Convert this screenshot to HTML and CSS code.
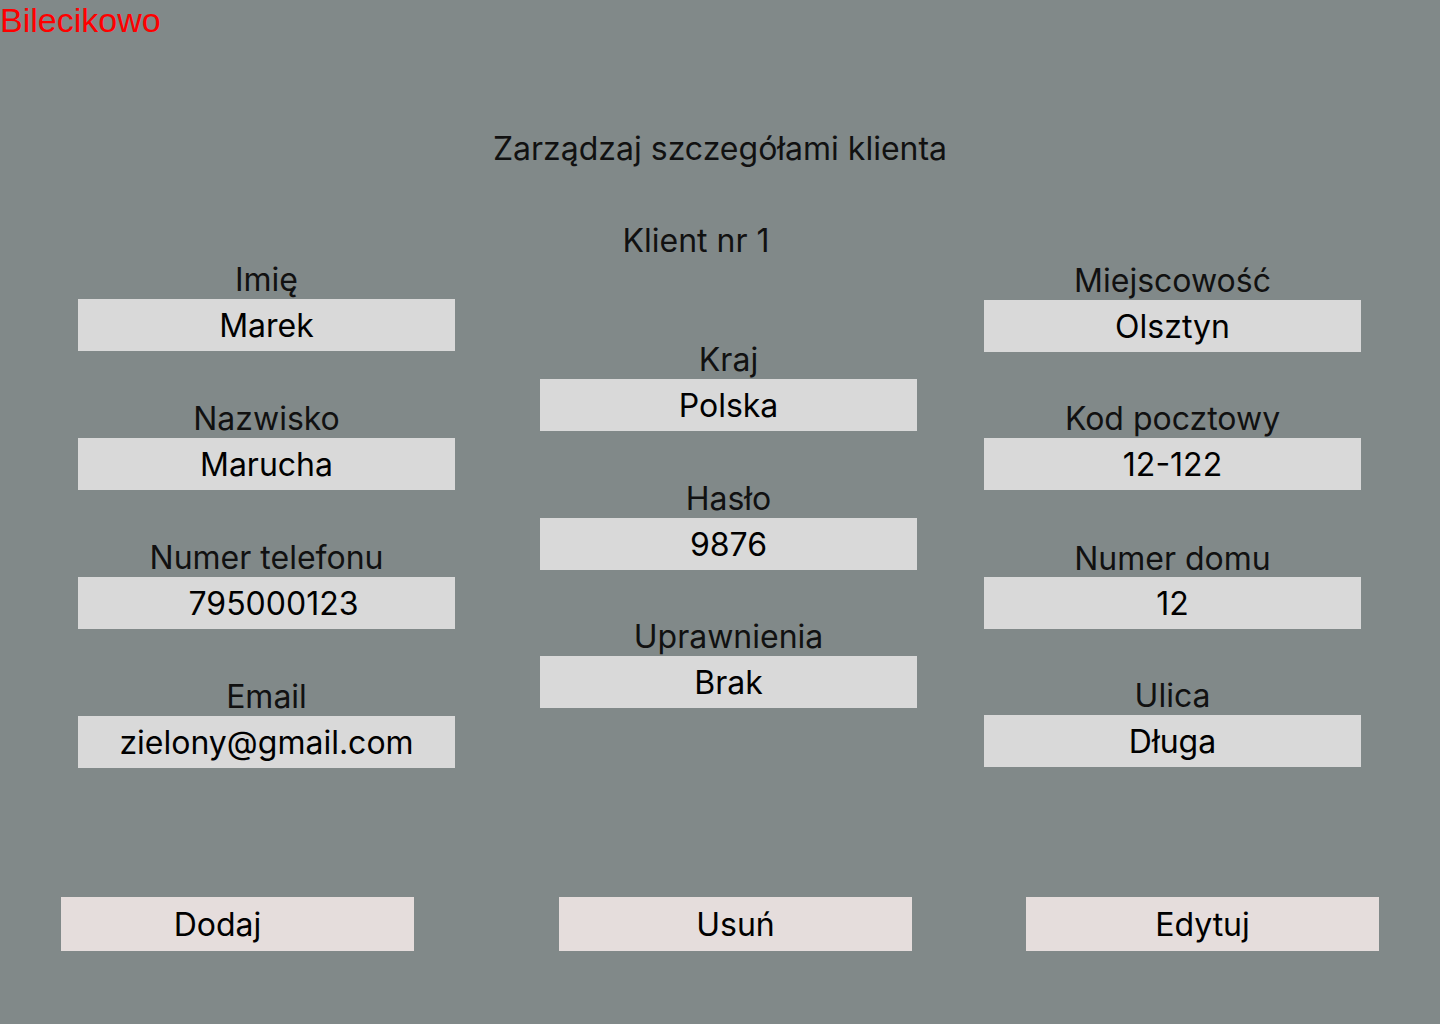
FILE: index.html
```html
<!DOCTYPE html>
<html lang="pl">
<head>
    <meta charset="UTF-8">
    <meta name="viewport" content="width=device-width, initial-scale=1.0">
    <title>Bilecikowo - Klient</title>
    <link rel="stylesheet" href="styles.css">
</head>
<body>
    <header class="brand">Bilecikowo</header>

    <h1 class="title">Zarządzaj szczegółami klienta</h1>

    <main class="details">
        <section class="col col-left">
            <div class="field">
                <label>Imię</label>
                <div class="value">Marek</div>
            </div>
            <div class="field">
                <label>Nazwisko</label>
                <div class="value">Marucha</div>
            </div>
            <div class="field">
                <label>Numer telefonu</label>
                <div class="value value-phone">795000123</div>
            </div>
            <div class="field">
                <label>Email</label>
                <div class="value">zielony@gmail.com</div>
            </div>
        </section>

        <section class="col col-mid">
            <p class="client-no">Klient nr 1</p>
            <div class="field">
                <label>Kraj</label>
                <div class="value">Polska</div>
            </div>
            <div class="field">
                <label>Hasło</label>
                <div class="value">9876</div>
            </div>
            <div class="field">
                <label>Uprawnienia</label>
                <div class="value">Brak</div>
            </div>
        </section>

        <section class="col col-right">
            <div class="field">
                <label>Miejscowość</label>
                <div class="value">Olsztyn</div>
            </div>
            <div class="field">
                <label>Kod pocztowy</label>
                <div class="value">12-122</div>
            </div>
            <div class="field">
                <label class="label-low">Numer domu</label>
                <div class="value">12</div>
            </div>
            <div class="field">
                <label>Ulica</label>
                <div class="value">Długa</div>
            </div>
        </section>
    </main>

    <div class="actions">
        <button class="btn btn-add">Dodaj</button>
        <button class="btn btn-del">Usuń</button>
        <button class="btn btn-edit">Edytuj</button>
    </div>
</body>
</html>
```

FILE: styles.css
```css
body {
    margin: 0;
    background: #818989;
    font-family: 'Inter', 'Noto Sans', sans-serif;
    color: #111;
    width: 1440px;
    height: 1024px;
    overflow: hidden;
}
.brand {
    font-family: 'Liberation Sans', Arial, sans-serif;
    font-size: 34px;
    color: #ff0000;
    padding-top: 1px;
    line-height: 38px;
}
.title {
    margin: 90px 0 0;
    font-size: 32px;
    font-weight: 400;
    text-align: center;
    line-height: 39px;
}
.details {
    display: flex;
    align-items: flex-start;
    padding-left: 78px;
    margin-top: 53px;
}
.col {
    width: 377px;
    display: flex;
    flex-direction: column;
    gap: 48px;
}
.col-left {
    padding-top: 39px;
}
.col-mid {
    margin-left: 85px;
    gap: 47px;
}
.col-mid .field:nth-of-type(2) {
    margin-top: 1px;
}
.col-right {
    margin-left: 67px;
    padding-top: 40px;
    gap: 47px;
}
.client-no {
    margin: 0 65px 33px 0;
    font-size: 32px;
    line-height: 39px;
    text-align: center;
}
.field label {
    display: block;
    text-align: center;
    font-size: 32px;
    line-height: 39px;
}
.field .label-low {
    line-height: 36px;
    padding-top: 4px;
}
.value {
    background: #d9d9d9;
    height: 50px;
    padding-top: 2px;
    line-height: 50px;
    font-size: 32px;
    text-align: center;
    color: #000;
}
.value-phone {
    padding-left: 14px;
}
.actions {
    display: flex;
    padding-left: 61px;
    margin-top: 129px;
}
.btn {
    width: 353px;
    height: 54px;
    border: none;
    background: #e5dddc;
    font-family: 'Inter', 'Noto Sans', sans-serif;
    font-size: 32px;
    color: #000;
    padding: 0;
    cursor: pointer;
}
.btn-add {
    padding-right: 40px;
}
.btn-del {
    margin-left: 145px;
}
.btn-edit {
    margin-left: 114px;
}
```
